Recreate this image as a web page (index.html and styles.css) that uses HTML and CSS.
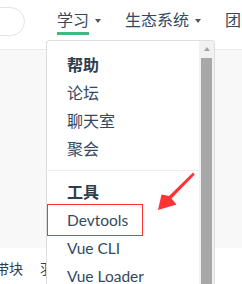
FILE: index.html
```html
<!DOCTYPE html>
<html lang="zh-CN">
<head>
<meta charset="utf-8">
<link rel="stylesheet" href="styles.css">
</head>
<body>
<header class="header">
  <div class="search"></div>
  <nav class="nav">
    <div class="nav-item"><span class="nav-text active">学习</span><span class="caret"></span></div>
    <div class="nav-item"><span class="nav-text">生态系统</span><span class="caret"></span></div>
    <div class="nav-item"><span class="nav-text">团队</span></div>
  </nav>
</header>
<div class="band"></div>
<p class="body-text"><span>带块</span><span class="gap">羽</span></p>
<div class="dropdown">
  <div class="menu">
    <div class="group">
      <div class="group-title">帮助</div>
      <div class="menu-item">论坛</div>
      <div class="menu-item">聊天室</div>
      <div class="menu-item">聚会</div>
    </div>
    <div class="group">
      <div class="group-title">工具</div>
      <div class="menu-item latin">Devtools</div>
      <div class="menu-item latin">Vue CLI</div>
      <div class="menu-item latin">Vue Loader</div>
    </div>
  </div>
  <div class="scrollbar">
    <div class="sb-up"><span class="sb-tri"></span></div>
    <div class="sb-thumb"></div>
  </div>
</div>
<div class="highlight"></div>
<svg class="arrow" viewBox="150 165 50 50" width="50" height="50">
  <polygon points="193,172.5 194.8,174.6 171.5,198.5 176.5,204.5 158,210 161.5,194.5 169,196" fill="#f33"/>
</svg>
</body>
</html>
```

FILE: styles.css
```css
html, body {
  margin: 0;
  padding: 0;
}
body {
  width: 242px;
  height: 284px;
  overflow: hidden;
  position: relative;
  background: #fff;
  font-family: "Lato", "Noto Sans CJK SC", sans-serif;
  color: #2c3e50;
}
.header {
  height: 49px;
  display: flex;
  align-items: flex-start;
  white-space: nowrap;
  overflow: hidden;
}
.search {
  flex: none;
  width: 43px;
  height: 27px;
  margin-left: -20px;
  margin-top: 7px;
  border: 1px solid #e3e3e3;
  border-radius: 15px;
}
.nav {
  display: flex;
  gap: 24px;
  margin-left: 32px;
  flex: none;
}
.nav-item {
  display: flex;
  align-items: flex-start;
  flex: none;
}
.nav-text {
  font-size: 16px;
  line-height: 22px;
  margin-top: 9px;
  padding-bottom: 1px;
  border-bottom: 3px solid transparent;
  color: #34495e;
}
.nav-text.active {
  border-bottom-color: #42b983;
}
.caret {
  width: 0;
  height: 0;
  margin-left: 6px;
  margin-top: 19px;
  border-left: 3px solid transparent;
  border-right: 3px solid transparent;
  border-top: 4px solid #4f5959;
}
.band {
  height: 198px;
  background: #f8f8f8;
  border-top: 1px solid #eaeaea;
}
.body-text {
  margin: 10px 0 0;
  font-size: 14px;
  line-height: 22px;
  text-indent: -5px;
  white-space: nowrap;
  overflow: hidden;
}
.gap {
  margin-left: 17px;
}
.dropdown {
  position: absolute;
  left: 46px;
  top: 40px;
  width: 167px;
  height: 260px;
  border: 1px solid #ddd;
  border-bottom: none;
  border-radius: 4px 4px 0 0;
  background: #fff;
  display: flex;
  overflow: hidden;
}
.menu {
  flex: 1;
  padding-top: 10px;
}
.group + .group {
  margin-top: 7px;
  padding-top: 7px;
  border-top: 1px solid #eee;
}
.group-title {
  font-size: 16px;
  font-weight: 700;
  line-height: 28px;
  padding-left: 20px;
}
.menu-item {
  font-size: 16px;
  line-height: 28px;
  padding-left: 20px;
  white-space: nowrap;
  color: #34495e;
}
.menu-item.latin {
  font-size: 15.5px;
}
.scrollbar {
  flex: none;
  width: 15px;
  background: #f1f1f1;
  display: flex;
  flex-direction: column;
}
.sb-up {
  height: 16px;
  display: flex;
  align-items: center;
  justify-content: center;
}
.sb-tri {
  width: 0;
  height: 0;
  border-left: 3.5px solid transparent;
  border-right: 3.5px solid transparent;
  border-bottom: 4px solid #a3a3a3;
}
.sb-thumb {
  flex: 1;
  margin: 1px 2px 0 2px;
  background: #a8a8a8;
}
.highlight {
  position: absolute;
  left: 47px;
  top: 204px;
  width: 96px;
  height: 32px;
  box-sizing: border-box;
  border: 1px solid #f33;
}
.arrow {
  position: absolute;
  left: 150px;
  top: 165px;
}
```
